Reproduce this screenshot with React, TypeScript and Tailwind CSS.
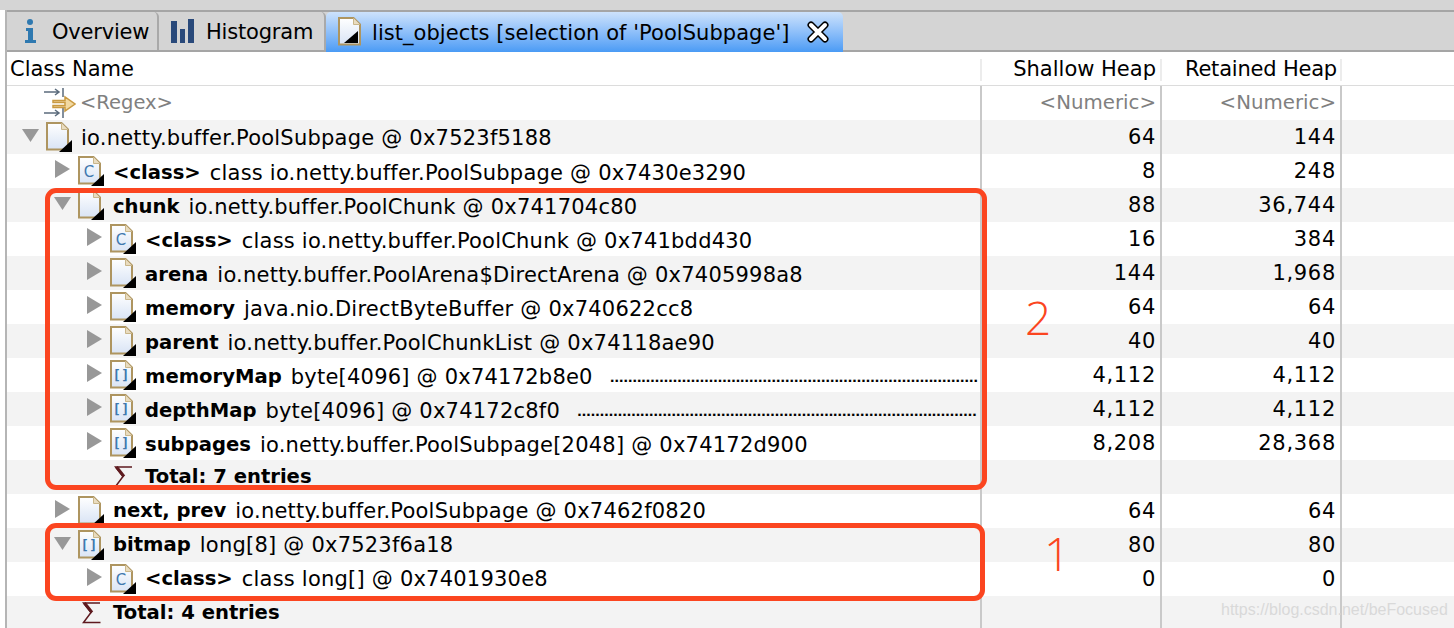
const TEXT_FONT = "font-['DejaVu_Sans',sans-serif]"

type RowData = {
    level: number
    open?: boolean
    icon?: "doc" | "class" | "array" | "sum"
    name?: string
    value?: string
    dots?: number
    shallow?: string
    retained?: string
    shift?: string
}

const rows: RowData[] = [
    { level: 0, open: true, icon: "doc", value: "io.netty.buffer.PoolSubpage @ 0x7523f5188", shallow: "64", retained: "144", shift: "translate-y-[1px]" },
    { level: 1, icon: "class", name: "<class>", value: "class io.netty.buffer.PoolSubpage @ 0x7430e3290", shallow: "8", retained: "248", shift: "translate-y-[2px]" },
    { level: 1, open: true, icon: "doc", name: "chunk", value: "io.netty.buffer.PoolChunk @ 0x741704c80", shallow: "88", retained: "36,744", shift: "translate-y-[2px]" },
    { level: 2, icon: "class", name: "<class>", value: "class io.netty.buffer.PoolChunk @ 0x741bdd430", shallow: "16", retained: "384", shift: "translate-y-[2px]" },
    { level: 2, icon: "doc", name: "arena", value: "io.netty.buffer.PoolArena$DirectArena @ 0x7405998a8", shallow: "144", retained: "1,968", shift: "translate-y-[2px]" },
    { level: 2, icon: "doc", name: "memory", value: "java.nio.DirectByteBuffer @ 0x740622cc8", shallow: "64", retained: "64", shift: "translate-y-[2px]" },
    { level: 2, icon: "doc", name: "parent", value: "io.netty.buffer.PoolChunkList @ 0x74118ae90", shallow: "40", retained: "40", shift: "translate-y-[2px]" },
    { level: 2, icon: "array", name: "memoryMap", value: "byte[4096] @ 0x74172b8e0", dots: 82, shallow: "4,112", retained: "4,112", shift: "translate-y-[2px]" },
    { level: 2, icon: "array", name: "depthMap", value: "byte[4096] @ 0x74172c8f0", dots: 89, shallow: "4,112", retained: "4,112", shift: "translate-y-[2px]" },
    { level: 2, icon: "array", name: "subpages", value: "io.netty.buffer.PoolSubpage[2048] @ 0x74172d900", shallow: "8,208", retained: "28,368", shift: "translate-y-[2px]" },
    { level: 2, icon: "sum", name: "Total: 7 entries" },
    { level: 1, icon: "doc", name: "next, prev", value: "io.netty.buffer.PoolSubpage @ 0x7462f0820", shallow: "64", retained: "64" },
    { level: 1, open: true, icon: "array", name: "bitmap", value: "long[8] @ 0x7523f6a18", shallow: "80", retained: "80" },
    { level: 2, icon: "class", name: "<class>", value: "class long[] @ 0x7401930e8", shallow: "0", retained: "0" },
    { level: 1, icon: "sum", name: "Total: 4 entries" },
]

const Arrow = ({ open }: { open?: boolean }) => (
    <svg width="18" height="18" viewBox="0 0 18 18" className="shrink-0">
        {open ? <polygon points="0,3 17,3 8.5,16" fill="#989898" /> : <polygon points="1,0 16,9 1,18" fill="#989898" />}
    </svg>
)

const DocIcon = ({ kind }: { kind: string }) => (
    <svg width="28" height="30" viewBox="0 0 28 30" className="shrink-0">
        <defs>
            <linearGradient id="docfill" x1="0" y1="0" x2="0" y2="1">
                <stop offset="0" stopColor="#ffffff" />
                <stop offset="1" stopColor="#d9e4f5" />
            </linearGradient>
        </defs>
        <path d="M1 1H15.5L22 7.5V27.5H1Z" fill="url(#docfill)" stroke="#ae9560" strokeWidth="2" />
        <path d="M15.5 1V7.5H22" fill="#e9dcc0" stroke="#c9b68a" strokeWidth="1" />
        {kind === "tab" ? (
            <polygon points="20,14 20,26 6,26" fill="#000000" />
        ) : (
            <polygon points="26,18 26,30 13,30" fill="#000000" />
        )}
        {kind === "class" && (
            <text x="11" y="21" textAnchor="middle" fontSize="15" fill="#3f78ae" fontFamily="DejaVu Sans">
                C
            </text>
        )}
        {kind === "array" && (
            <text x="11" y="20" textAnchor="middle" fontSize="14" fontWeight="700" fill="#3f78ae" fontFamily="DejaVu Sans Mono">
                []
            </text>
        )}
    </svg>
)

const SumIcon = () => (
    <svg width="20" height="24" viewBox="0 0 20 24" className="shrink-0">
        <path d="M18 2H1.5L9 11.5L1.5 21.5H18.5" fill="none" stroke="#5e1a1f" strokeWidth="1.5" />
        <path d="M2.5 2L10 11.5" fill="none" stroke="#5e1a1f" strokeWidth="3" />
    </svg>
)

const RegexIcon = () => (
    <svg width="32" height="32" viewBox="0 0 32 32" className="shrink-0">
        <path d="M0 5H15M11 2L15 5L11 8M19 1V10M0 26H15M11 23L15 26L11 29M19 21V31" fill="none" stroke="#5b6b7c" strokeWidth="1.5" />
        <path d="M9 13.5H21V10L31 17L21 24V20.5H9V18.5H21V15.5H9Z" fill="#f2d9a2" stroke="#c99a42" strokeWidth="1.5" />
    </svg>
)

const Cell = ({ children, gray }: { children?: React.ReactNode; gray?: boolean }) => (
    <div
        className={`flex w-[180px] shrink-0 items-center justify-end border-r-2 border-[#c9c9c9] pr-[4px] ${
            gray ? "text-[19.8px] text-[#808080]" : "tracking-[0.7px] text-black"
        }`}
    >
        {children}
    </div>
)

const Row = ({ row, striped }: { row: RowData; striped: boolean }) => {
    const isSum = row.icon === "sum"
    return (
        <div className={`flex h-[34px] ${striped ? "bg-[#f3f3f3]" : "bg-white"}`}>
            <div
                className={`flex w-[975px] shrink-0 items-center overflow-hidden whitespace-nowrap border-r-2 border-[#c9c9c9] ${
                    row.level === 0 ? "pl-[15px]" : row.level === 1 ? "pl-[47px]" : "pl-[79px]"
                }`}
            >
                <div className="flex w-[24px] shrink-0 -translate-y-[2px]">{!isSum && <Arrow open={row.open} />}</div>
                <div className="flex w-[35px] shrink-0 justify-start">
                    {isSum ? (
                        <div className="ml-[4px] flex"><SumIcon /></div>
                    ) : (
                        <DocIcon kind={row.icon ?? "doc"} />
                    )}
                </div>
                <div className={`flex items-center ${row.shift ?? ""}`}>
                    {row.name && <span className="mr-[9px] text-[19.6px] font-bold">{row.name}</span>}
                    {row.value && <span className="tracking-[0.22px]">{row.value}</span>}
                    {row.dots && <span className="ml-[17px] text-[13px] font-bold tracking-[-0.45px]">{".".repeat(row.dots)}</span>}
                </div>
            </div>
            <Cell>{row.shallow}</Cell>
            <Cell>{row.retained}</Cell>
            <div className="flex-1" />
        </div>
    )
}

const Tab = ({ width, icon, label }: { width: string; icon: React.ReactNode; label: string }) => (
    <div className={`flex h-full ${width} shrink-0 items-center rounded-t-[5px] border-r-2 border-[#a9a9a9] bg-[#d4d4d4] pl-[10px]`}>
        {icon}
        <span className="translate-y-[1px] tracking-[-0.2px]">{label}</span>
    </div>
)

const App = () => (
    <div className={`relative h-[628px] w-[1454px] overflow-hidden bg-white text-[21px] leading-none text-black ${TEXT_FONT}`}>
        <div className="h-[10px] bg-[#d5d5d5]" />
        <div className="pl-[5px]">
            <div className="border-l-2 border-[#b5b5b5]">
                {/* tab strip */}
                <div className="flex h-[40px] border-t-2 border-[#a5a5a5] bg-[#d4d4d4]">
                    <Tab
                        width="w-[152px]"
                        label="Overview"
                        icon={
                            <svg width="32" height="26" viewBox="0 0 32 26" className="mr-[3px] shrink-0">
                                <circle cx="13" cy="4" r="3" fill="#2f79b0" />
                                <path d="M9 10H16V22H19V25H8V22H11V13H9Z" fill="#2f79b0" />
                            </svg>
                        }
                    />
                    <Tab
                        width="w-[167px]"
                        label="Histogram"
                        icon={
                            <svg width="36" height="26" viewBox="0 0 36 26" className="mr-[1px] shrink-0">
                                <path d="M2 3H8V25H2ZM11 11H16V25H11ZM19 1H25V25H19Z" fill="#29497a" />
                            </svg>
                        }
                    />
                    <div className="relative z-10 flex h-[40px] w-[517px] shrink-0 items-center whitespace-nowrap rounded-t-[5px] bg-gradient-to-b from-[#cde2fb] to-[#4a9bf5] pl-[12px]">
                        <div className="mr-[6px] flex shrink-0"><DocIcon kind="tab" /></div>
                        <span className="translate-y-[1px] tracking-[0.05px]">list_objects [selection of 'PoolSubpage']</span>
                        <svg width="24" height="24" viewBox="0 0 24 24" className="ml-[16px] shrink-0">
                            <path d="M5 5L19 19M19 5L5 19" stroke="#000000" strokeWidth="7" strokeLinecap="round" />
                            <path d="M5 5L19 19M19 5L5 19" stroke="#ffffff" strokeWidth="4" strokeLinecap="round" />
                        </svg>
                    </div>
                </div>
                {/* table header */}
                <div className="flex h-[36px] items-center border-t-2 border-b border-t-[#a5a5a5] border-b-[#dcdcdc] bg-white pt-[2px]">
                    <div className="flex h-[22px] w-[975px] shrink-0 items-center border-r-2 border-[#ececec] pl-[3px]">Class Name</div>
                    <div className="flex h-[22px] w-[180px] shrink-0 items-center justify-end border-r-2 border-[#ececec] pr-[4px]">Shallow Heap</div>
                    <div className="flex h-[22px] w-[180px] shrink-0 items-center justify-end border-r-2 border-[#ececec] pr-[3px] tracking-[-0.2px]">Retained Heap</div>
                </div>
                {/* filter row */}
                <div className="flex h-[34px] bg-white text-[#808080]">
                    <div className="flex w-[975px] shrink-0 items-center border-r-2 border-[#c9c9c9] pl-[37px] text-[19.5px]">
                        <RegexIcon />
                        <span className="ml-[4px]">&lt;Regex&gt;</span>
                    </div>
                    <Cell gray>&lt;Numeric&gt;</Cell>
                    <Cell gray>&lt;Numeric&gt;</Cell>
                </div>
                {rows.map((row, i) => (
                    <Row key={i} row={row} striped={i % 2 === 0} />
                ))}
                <div className="flex h-[30px] bg-[#f3f3f3]">
                    <div className="w-[975px] shrink-0 border-r-2 border-[#c9c9c9]" />
                    <Cell />
                    <Cell />
                </div>
            </div>
        </div>

        {/* red annotations drawn over the table */}
        <div className="absolute left-[45px] top-[188px] h-[302px] w-[942px] rounded-[11px] border-[5px] border-[#fb4520]" />
        <div className="absolute left-[45px] top-[523px] h-[78px] w-[940px] rounded-[11px] border-[5px] border-[#fb4520]" />
        <div className="absolute left-[1025px] top-[294px] font-['Open_Sans',sans-serif] text-[46px] font-light leading-[46px] text-[#fb4520]">2</div>
        <div className="absolute left-[1044px] top-[530px] font-['Open_Sans',sans-serif] text-[46px] font-light leading-[46px] text-[#fb4520]">1</div>
        <div className="absolute left-[1221px] top-[600px] font-['Liberation_Sans',sans-serif] text-[16px] leading-[20px] text-[#d9d9d9]">https://blog.csdn.net/beFocused</div>
    </div>
)

export default App
